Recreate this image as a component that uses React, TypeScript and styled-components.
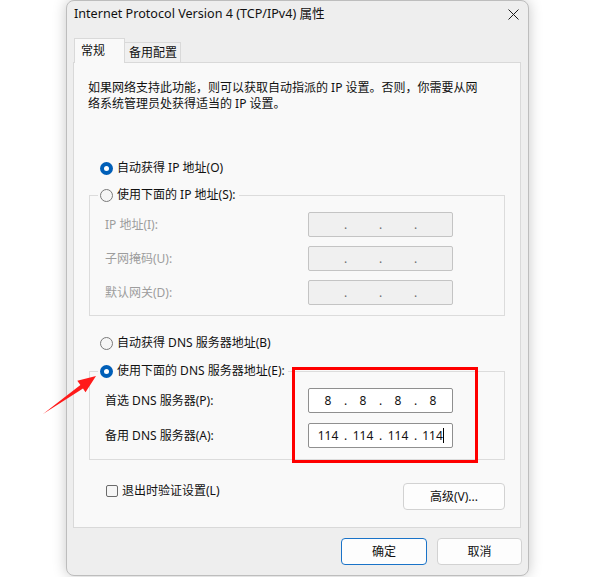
import React from "react";
import styled, { createGlobalStyle } from "styled-components";

const GlobalStyle = createGlobalStyle`
  html, body {
    margin: 0;
    padding: 0;
    background: #ffffff;
  }
  body {
    font-family: "Noto Sans", "Noto Sans CJK SC", sans-serif;
    font-size: 12px;
    line-height: 16px;
    color: #111111;
    overflow: hidden;
  }
`;

const Stage = styled.div`
  position: relative;
  width: 600px;
  height: 577px;
  padding-left: 66px;
  box-sizing: border-box;
  overflow: hidden;
`;

const Window = styled.div`
  width: 463px;
  height: 576px;
  box-sizing: border-box;
  background: #eeeeee;
  border: 1px solid #bdbdbd;
  border-radius: 8px;
  box-shadow: 0 0 14px rgba(0, 0, 0, 0.22);
  display: flex;
  flex-direction: column;
`;

const TitleBar = styled.div`
  height: 26px;
  display: flex;
  align-items: center;
  justify-content: space-between;
  padding-left: 7px;
  padding-right: 9px;
`;

const Title = styled.span`
  font-size: 12.6px;
  color: #111111;
`;

const Body = styled.div`
  padding: 11px 7px 0 6px;
  display: flex;
  flex-direction: column;
`;

const TabStrip = styled.div`
  display: flex;
  align-items: flex-end;
  padding-left: 1px;
  margin-bottom: -1px;
  position: relative;
  z-index: 1;
`;

const Tab = styled.div<{ $active?: boolean }>`
  box-sizing: border-box;
  height: ${(p) => (p.$active ? "25px" : "21px")};
  width: ${(p) => (p.$active ? "51px" : "56px")};
  padding-left: ${(p) => (p.$active ? "6px" : "4px")};
  display: flex;
  align-items: center;
  border: 1px solid #d9d9d9;
  border-bottom: ${(p) => (p.$active ? "none" : "1px solid #d9d9d9")};
  border-left: ${(p) => (p.$active ? "1px solid #d9d9d9" : "none")};
  background: ${(p) => (p.$active ? "#f9f9f9" : "#f0f0f0")};
  color: #111111;
`;

const Panel = styled.div`
  background: #f9f9f9;
  border: 1px solid #d9d9d9;
  padding: 17px 15px 17px 15px;
  display: flex;
  flex-direction: column;
`;

const Description = styled.p`
  margin: 0 0 0 -1px;
  line-height: 16px;
`;

const RadioRow = styled.div<{ $mt?: number; $legend?: boolean }>`
  display: flex;
  align-items: center;
  height: 16px;
  margin-top: ${(p) => p.$mt ?? 0}px;
  margin-left: ${(p) => (p.$legend ? "-7px" : "11px")};
  ${(p) =>
    p.$legend &&
    `
    align-self: flex-start;
    margin-top: -9px;
    padding: 0 3px 0 2px;
    background: #f9f9f9;
  `}
  gap: 4px;
  color: #111111;
`;

const Radio = styled.span<{ $checked?: boolean }>`
  box-sizing: border-box;
  width: 13px;
  height: 13px;
  border-radius: 50%;
  flex: none;
  display: flex;
  align-items: center;
  justify-content: center;
  background: ${(p) => (p.$checked ? "#005fb8" : "#f6f6f6")};
  border: ${(p) => (p.$checked ? "none" : "1px solid #7a7a7a")};
  &::after {
    content: "";
    display: ${(p) => (p.$checked ? "block" : "none")};
    width: 5px;
    height: 5px;
    border-radius: 50%;
    background: #ffffff;
  }
`;

const Group = styled.div<{ $mt: number; $pb: number }>`
  margin-top: ${(p) => p.$mt}px;
  border: 1px solid #dcdcdc;
  padding: 0 15px ${(p) => p.$pb}px 15px;
  display: flex;
  flex-direction: column;
`;

const Rows = styled.div<{ $gap: number }>`
  display: flex;
  flex-direction: column;
  gap: ${(p) => p.$gap}px;
  margin-top: 9px;
`;

const FieldRow = styled.div`
  display: flex;
  align-items: center;
  height: 25px;
`;

const FieldLabel = styled.span<{ $disabled?: boolean }>`
  width: 203px;
  flex: none;
  color: ${(p) => (p.$disabled ? "#9d9d9d" : "#111111")};
`;

const IpBox = styled.div<{ $disabled?: boolean }>`
  box-sizing: border-box;
  width: 145px;
  height: 25px;
  padding-left: 4px;
  display: flex;
  align-items: center;
  border: 1px solid ${(p) => (p.$disabled ? "#c4c4c4" : "#8f8f8f")};
  border-radius: 2px;
  background: ${(p) => (p.$disabled ? "#f0f0f0" : "#ffffff")};
  color: #111111;
`;

const Segment = styled.span`
  width: 30px;
  display: inline-flex;
  justify-content: center;
  align-items: center;
`;

const Dot = styled.span<{ $disabled?: boolean }>`
  width: 5px;
  text-align: center;
  color: ${(p) => (p.$disabled ? "#6e6e6e" : "#111111")};
`;

const Caret = styled.span`
  display: inline-block;
  width: 1px;
  height: 15px;
  background: #000000;
`;

const BottomRow = styled.div`
  margin-top: 23px;
  display: flex;
  align-items: flex-start;
  justify-content: space-between;
`;

const CheckLabel = styled.label`
  display: flex;
  align-items: center;
  height: 16px;
  gap: 4px;
  margin-left: 17px;
  color: #111111;
`;

const CheckBox = styled.span`
  box-sizing: border-box;
  width: 12px;
  height: 12px;
  border: 1px solid #6b6b6b;
  border-radius: 2px;
  background: #f6f6f6;
`;

const Button = styled.button<{ $primary?: boolean; $w: number }>`
  box-sizing: border-box;
  width: ${(p) => p.$w}px;
  height: 27px;
  padding: 0;
  font: inherit;
  color: #111111;
  background: #fdfdfd;
  border: 1px solid ${(p) => (p.$primary ? "#1a73c8" : "#d2d2d2")};
  border-radius: 4px;
`;

const DialogButtons = styled.div`
  margin-top: 10px;
  margin-right: -1px;
  display: flex;
  justify-content: flex-end;
  gap: 10px;
`;

const Highlight = styled.div`
  position: absolute;
  left: 292px;
  top: 367px;
  width: 186px;
  height: 96px;
  box-sizing: border-box;
  border: 3px solid #ff0000;
  pointer-events: none;
`;

const Arrow = styled.svg`
  position: absolute;
  left: 0;
  top: 0;
  pointer-events: none;
`;

function IpField({
  values,
  disabled,
  caret,
}: {
  values: string[];
  disabled?: boolean;
  caret?: boolean;
}) {
  return (
    <IpBox $disabled={disabled}>
      {values.map((v, i) => (
        <React.Fragment key={i}>
          {i > 0 && <Dot $disabled={disabled}>.</Dot>}
          <Segment>
            {v}
            {caret && i === values.length - 1 && <Caret />}
          </Segment>
        </React.Fragment>
      ))}
    </IpBox>
  );
}

const empty = ["", "", "", ""];

export default function App() {
  return (
    <>
      <GlobalStyle />
      <Stage>
        <Window>
          <TitleBar>
            <Title>Internet Protocol Version 4 (TCP/IPv4) 属性</Title>
            <svg width="11" height="11" viewBox="0 0 11 11">
              <path d="M0.5 0.5 L10.5 10.5 M10.5 0.5 L0.5 10.5" stroke="#1a1a1a" strokeWidth="1" />
            </svg>
          </TitleBar>
          <Body>
            <TabStrip>
              <Tab $active>常规</Tab>
              <Tab>备用配置</Tab>
            </TabStrip>
            <Panel>
              <Description>
                如果网络支持此功能，则可以获取自动指派的 IP 设置。否则，你需要从网
                <br />
                络系统管理员处获得适当的 IP 设置。
              </Description>

              <RadioRow $mt={48}>
                <Radio $checked />
                自动获得 IP 地址(O)
              </RadioRow>

              <Group $mt={19} $pb={10}>
                <RadioRow $legend>
                  <Radio />
                  使用下面的 IP 地址(S):
                </RadioRow>
                <Rows $gap={9}>
                  <FieldRow>
                    <FieldLabel $disabled>IP 地址(I):</FieldLabel>
                    <IpField values={empty} disabled />
                  </FieldRow>
                  <FieldRow>
                    <FieldLabel $disabled>子网掩码(U):</FieldLabel>
                    <IpField values={empty} disabled />
                  </FieldRow>
                  <FieldRow>
                    <FieldLabel $disabled>默认网关(D):</FieldLabel>
                    <IpField values={empty} disabled />
                  </FieldRow>
                </Rows>
              </Group>

              <RadioRow $mt={19}>
                <Radio />
                自动获得 DNS 服务器地址(B)
              </RadioRow>

              <Group $mt={20} $pb={11}>
                <RadioRow $legend>
                  <Radio $checked />
                  使用下面的 DNS 服务器地址(E):
                </RadioRow>
                <Rows $gap={10}>
                  <FieldRow>
                    <FieldLabel>首选 DNS 服务器(P):</FieldLabel>
                    <IpField values={["8", "8", "8", "8"]} />
                  </FieldRow>
                  <FieldRow>
                    <FieldLabel>备用 DNS 服务器(A):</FieldLabel>
                    <IpField values={["114", "114", "114", "114"]} caret />
                  </FieldRow>
                </Rows>
              </Group>

              <BottomRow>
                <CheckLabel>
                  <CheckBox />
                  退出时验证设置(L)
                </CheckLabel>
                <Button $w={102}>高级(V)...</Button>
              </BottomRow>
            </Panel>
            <DialogButtons>
              <Button $primary $w={86}>确定</Button>
              <Button $w={85}>取消</Button>
            </DialogButtons>
          </Body>
        </Window>

        <Highlight />
        <Arrow width="600" height="577" viewBox="0 0 600 577">
          <polygon
            points="96,376 77.3,380.8 80.4,384.9 43,414 83,388.4 85.5,392.2"
            fill="#ff1a1a"
          />
        </Arrow>
      </Stage>
    </>
  );
}
